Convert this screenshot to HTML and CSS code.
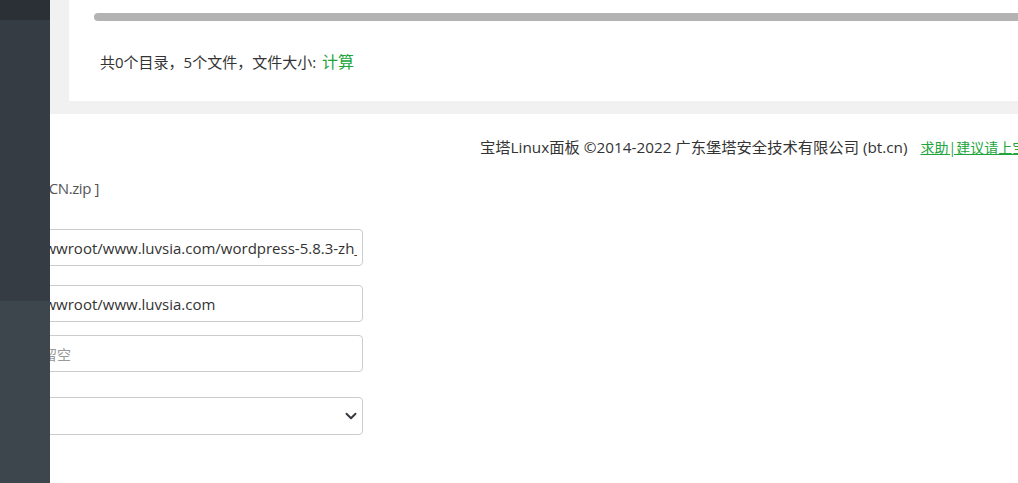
FILE: index.html
```html
<!DOCTYPE html>
<html lang="zh-CN">

<head>
    <meta charset="UTF-8">
    <meta name="viewport" content="width=device-width, initial-scale=1.0">
    <title>宝塔Linux面板 - 文件管理</title>
    <link rel="stylesheet" href="styles.css">
</head>

<body>
    <!-- left menu, sits over the page -->
    <div class="sidebar">
        <div class="side-top"></div>
        <div class="side-mid"></div>
        <div class="side-bottom"></div>
    </div>

    <div class="main">
        <div class="content">
            <div class="file-box">
                <div class="hscroll"></div>
                <div class="file-stat">共0个目录，5个文件，文件大小: <a class="link">计算</a></div>
            </div>
        </div>

        <div class="footer">
            宝塔Linux面板 ©2014-2022 广东堡塔安全技术有限公司 (bt.cn)<a class="footer-link">求助|建议请上宝塔论坛</a>
        </div>

        <!-- unzip dialog -->
        <form class="unzip-form">
            <div class="unzip-file"><span>解压文件 [ wordpress-5.8.3-zh_CN.zip ]</span></div>
            <input class="form-input first" type="text" value="/www/wwwroot/www.luvsia.com/wordpress-5.8.3-zh_CN.zip">
            <input class="form-input second" type="text" value="/www/wwwroot/www.luvsia.com">
            <input class="form-input third" type="text" placeholder="不需要请留空">
            <div class="form-select">
                <span>UTF-8</span>
                <svg width="12" height="12" viewBox="0 0 16 16">
                    <path d="M2 5l6 6 6-6" fill="none" stroke="#343a40" stroke-width="2.6" stroke-linecap="round" stroke-linejoin="round" />
                </svg>
            </div>
        </form>
    </div>
</body>

</html>
```

FILE: styles.css
```css
body {
    margin: 0;
    padding: 0;
    background-color: #ffffff;
    font-family: "Open Sans", "Noto Sans CJK SC", sans-serif;
    font-size: 15px;
    color: #333333;
    overflow: hidden;
}

.sidebar {
    position: fixed;
    top: 0;
    left: 0;
    width: 50px;
    height: 100%;
    display: flex;
    flex-direction: column;
    z-index: 10;
}

.side-top {
    height: 20px;
    background: #2b3036;
}

.side-mid {
    height: 281px;
    background: #353c43;
}

.side-bottom {
    flex: 1;
    background: #3d454d;
}

.main {
    margin-left: 50px;
}

.content {
    background: #f1f1f1;
    padding: 0 0 13px 19px;
}

.file-box {
    background: #ffffff;
    height: 101px;
    padding: 13px 0 0 25px;
    box-sizing: border-box;
}

.hscroll {
    height: 8px;
    border-radius: 4px 0 0 4px;
    background: #b3b3b3;
}

.file-stat {
    margin-top: 31px;
    padding-left: 6px;
    line-height: 20px;
}

.link {
    margin-left: 2px;
    color: #20a53a;
    font-size: 16px;
    cursor: pointer;
}

.footer {
    padding: 23px 0 0 430px;
    line-height: 20px;
    font-size: 15.3px;
    white-space: nowrap;
    overflow: hidden;
}

.footer-link {
    margin-left: 13px;
    font-size: 14px;
    color: #20a53a;
    text-decoration: underline;
    cursor: pointer;
}

.unzip-form {
    display: flex;
    flex-direction: column;
    width: 389px;
    margin-left: -76px;
    margin-top: 20px;
}

.unzip-file {
    width: 125px;
    display: flex;
    justify-content: flex-end;
    line-height: 20px;
    letter-spacing: -0.4px;
    color: #555555;
    white-space: nowrap;
}

.form-input {
    height: 37px;
    box-sizing: border-box;
    padding: 6px 5px 6px 12px;
    border: 1px solid #cccccc;
    border-radius: 4px;
    font-family: inherit;
    font-size: 15px;
    color: #333333;
    outline: none;
}

.form-input::placeholder {
    color: #999999;
    font-size: 14px;
}

.first {
    margin-top: 31px;
}

.second {
    margin-top: 19px;
}

.third {
    margin-top: 13px;
}

.form-select {
    height: 38px;
    margin-top: 25px;
    box-sizing: border-box;
    padding: 0 5px 0 12px;
    border: 1px solid #cccccc;
    border-radius: 4px;
    display: flex;
    align-items: center;
    justify-content: space-between;
}
```
